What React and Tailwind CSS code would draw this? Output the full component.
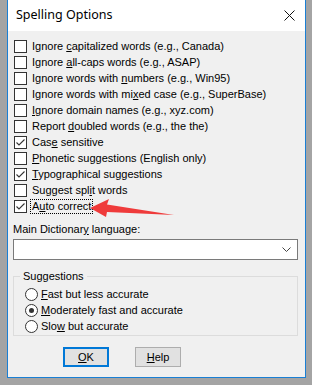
import React from 'react';

const options = [
  { pre: 'Ignore ', u: 'c', post: 'apitalized words (e.g., Canada)', checked: false },
  { pre: 'Ignore ', u: 'a', post: 'll-caps words (e.g., ASAP)', checked: false },
  { pre: 'Ignore words with ', u: 'n', post: 'umbers (e.g., Win95)', checked: false },
  { pre: 'Ignore words with mi', u: 'x', post: 'ed case (e.g., SuperBase)', checked: false },
  { pre: '', u: 'I', post: 'gnore domain names (e.g., xyz.com)', checked: false },
  { pre: 'Report ', u: 'd', post: 'oubled words (e.g., the the)', checked: false },
  { pre: 'Cas', u: 'e', post: ' sensitive', checked: true },
  { pre: '', u: 'P', post: 'honetic suggestions (English only)', checked: false },
  { pre: '', u: 'T', post: 'ypographical suggestions', checked: true },
  { pre: 'Suggest spl', u: 'i', post: 't words', checked: false },
  { pre: 'A', u: 'u', post: 'to correct', checked: true, focus: true },
];

const speeds = [
  { pre: '', u: 'F', post: 'ast but less accurate', on: false },
  { pre: '', u: 'M', post: 'oderately fast and accurate', on: true },
  { pre: 'Slo', u: 'w', post: ' but accurate', on: false },
];

function CheckBox({ checked }) {
  return (
    <span className="w-[13px] h-[13px] border border-[#333333] bg-white shrink-0 flex">
      {checked && (
        <svg width="11" height="11" viewBox="0 0 11 11">
          <path d="M1.5 5.5 L4 8 L9.5 2.5" fill="none" stroke="#333333" strokeWidth="1.1" />
        </svg>
      )}
    </span>
  );
}

function Radio({ on }) {
  return (
    <span className="w-[13px] h-[13px] rounded-full border border-[#333333] bg-white shrink-0 flex items-center justify-center">
      {on && <span className="w-[5px] h-[5px] rounded-full bg-[#333333]" />}
    </span>
  );
}

function Label({ pre, u, post }) {
  return (
    <>
      {pre}
      <span className="underline underline-offset-1">{u}</span>
      {post}
    </>
  );
}

export default function App() {
  return (
    <div className="relative w-[312px] h-[385px] bg-[#a4a4a4] flex overflow-hidden font-['Liberation_Sans',Arial,sans-serif]">
      {/* Dialog */}
      <div className="ml-[7px] w-[299px] h-[378px] border border-t-0 border-[#1a7fd4] bg-[#f0f0f0] flex flex-col shrink-0">
        <div className="h-[31px] bg-white flex items-center justify-between pl-[8px] pr-[10px] shrink-0">
          <span className="text-[12.5px] text-black font-['Noto_Sans',sans-serif] pb-[1px]">Spelling Options</span>
          <svg width="11" height="11" viewBox="0 0 11 11">
            <path d="M0.5 0.5 L10.5 10.5 M10.5 0.5 L0.5 10.5" stroke="#111111" strokeWidth="1" />
          </svg>
        </div>

        <div className="flex-1 flex flex-col pl-[5px] pr-[7px] pt-[7px] text-[11px] text-black leading-[13px]">
          {options.map((o, i) => (
            <div key={i} className="h-[16px] flex items-center pl-[1px]">
              <CheckBox checked={o.checked} />
              <span
                className={`ml-[3px] px-[1px] ${
                  o.focus ? 'border border-dotted border-black' : 'border border-transparent'
                }`}
              >
                <Label {...o} />
              </span>
            </div>
          ))}

          <div className="mt-[9px] h-[13px]">
            Main Dictionar<span className="underline underline-offset-1">y</span> language:
          </div>
          <div className="mt-[3px] h-[21px] border border-[#7a7a7a] bg-white flex items-center justify-end pr-[6px]">
            <svg width="9" height="5" viewBox="0 0 9 5">
              <path d="M0.5 0.5 L4.5 4.5 L8.5 0.5" fill="none" stroke="#444444" strokeWidth="1" />
            </svg>
          </div>

          <fieldset className="mt-[10px] border border-[#dcdcdc] px-0 pb-[1px] w-[285px]">
            <legend className="ml-[6px] px-[3px] leading-[13px]">Suggestions</legend>
            <div className="pt-[3px] pl-[11px]">
              {speeds.map((s, i) => (
                <div key={i} className="h-[16px] flex items-center">
                  <Radio on={s.on} />
                  <span className="ml-[3px]">
                    <Label {...s} />
                  </span>
                </div>
              ))}
            </div>
          </fieldset>

          <div className="mt-[11px] flex gap-[26px] pl-[50px]">
            <button className="w-[46px] h-[20px] border-2 border-[#0078d7] bg-[#e1e1e1] text-[11px] flex items-center justify-center">
              <span className="underline underline-offset-1">O</span>K
            </button>
            <button className="w-[46px] h-[20px] border border-[#adadad] bg-[#e1e1e1] text-[11px] flex items-center justify-center">
              <span className="underline underline-offset-1">H</span>elp
            </button>
          </div>
        </div>
      </div>

      {/* Red annotation arrow */}
      <svg className="absolute left-0 top-0 pointer-events-none" width="312" height="385" viewBox="0 0 312 385">
        <polygon
          points="90,208 109,199 107,204.5 174,215 107,212 106,217"
          fill="#ef3b3b"
        />
      </svg>
    </div>
  );
}
